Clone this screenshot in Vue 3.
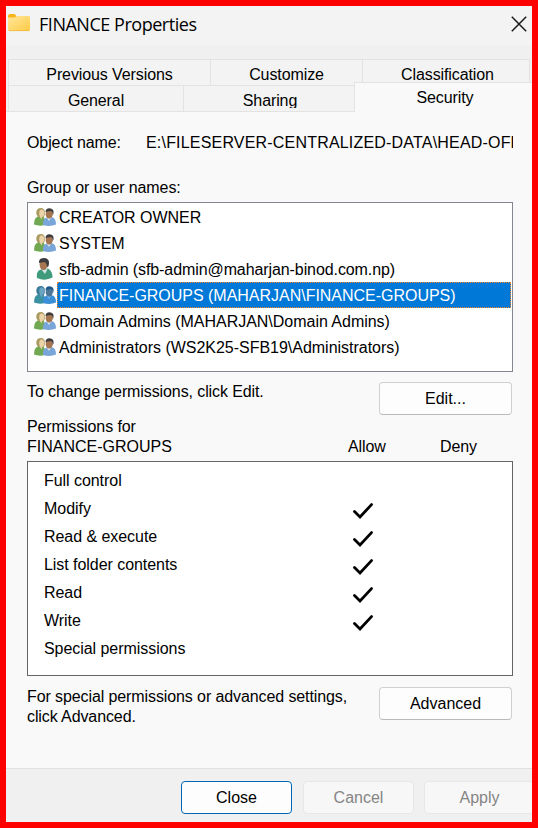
<script setup>
    import { ref } from 'vue';

    const backTabs = [
        { name: 'Previous Versions', class: 'tab--previous' },
        { name: 'Customize', class: 'tab--customize' },
        { name: 'Classification', class: 'tab--classification' },
    ];

    const principals = [
        { name: 'CREATOR OWNER', group: true },
        { name: 'SYSTEM', group: true },
        { name: 'sfb-admin (sfb-admin@maharjan-binod.com.np)', group: false },
        { name: 'FINANCE-GROUPS (MAHARJAN\\FINANCE-GROUPS)', group: true },
        { name: 'Domain Admins (MAHARJAN\\Domain Admins)', group: true },
        { name: 'Administrators (WS2K25-SFB19\\Administrators)', group: true },
    ];

    const permissions = [
        { name: 'Full control', allow: false },
        { name: 'Modify', allow: true },
        { name: 'Read & execute', allow: true },
        { name: 'List folder contents', allow: true },
        { name: 'Read', allow: true },
        { name: 'Write', allow: true },
        { name: 'Special permissions', allow: false },
    ];

    const selected = ref(3);

    function handleSelect(index) {
        selected.value = index;
    }
</script>

<template>
    <main class='dialog'>
        <header class='title-bar'>
            <svg class='title--folder' width='22' height='18' viewBox='0 0 22 18'>
                <defs>
                    <linearGradient id='folder' x1='0' y1='0' x2='1' y2='1'>
                        <stop offset='0' stop-color='#ffe69c' />
                        <stop offset='1' stop-color='#ffcb45' />
                    </linearGradient>
                </defs>
                <path d='M0 2Q0 0 2 0H6.5L8.5 2H20V8H0Z' fill='#f9b51c' />
                <path d='M0 3.500H6.5L9 2H20.5Q22 2 22 3.5V15.500Q22 17 20.500 17H1.500Q0 17 0 15.500Z' fill='url(#folder)' />
                <path d='M1 16.600H21' stroke='#efb63c' stroke-width='.8' />
            </svg>
            <h1 class='title--text'>FINANCE Properties</h1>
            <svg class='title--close' width='16' height='16' viewBox='0 0 16 16'>
                <path d='M.8.8 15.200 15.200M15.200.8.8 15.200' stroke='#1a1a1a' stroke-width='1.5' />
            </svg>
        </header>

        <nav class='tabs'>
            <div class='tab--row'>
                <span v-for='tab in backTabs' :key='tab.name' class='tab' :class='tab.class'>{{ tab.name }}</span>
            </div>
            <div class='tab--row'>
                <span class='tab tab--general'>General</span>
                <span class='tab tab--sharing'><span class='tab--clip'>Sharing</span></span>
                <span class='tab tab--security'>Security</span>
            </div>
        </nav>

        <section class='page'>
            <div class='object'>
                <span class='object--label'>Object name:</span>
                <span class='object--path'>E:\FILESERVER-CENTRALIZED-DATA\HEAD-OFF</span>
            </div>

            <div class='names--label'>Group or user names:</div>
            <ul class='names'>
                <li
                    v-for='(principal, index) in principals'
                    :key='principal.name'
                    class='names--item'
                    :class='{ selected: index === selected }'
                    @click='handleSelect(index)'
                >
                    <svg v-if='principal.group' class='names--icon' width='22' height='20' viewBox='0 0 22 20'>
                        <path class='green' d='M0 17.500Q0 10.500 4 9.500L9 9.300Q11.500 11 11 18Q5 19.500 0 17.500Z' />
                        <path class='blonde' d='M2.500 7.500Q1.500 1 6.500 1Q11.500 1 10.800 6.500Q11 10 8.500 10.500L4 10Z' />
                        <ellipse class='face' cx='7.700' cy='6.200' rx='2.500' ry='3.600' />
                        <path class='face' d='M5.500 9H8.500L7.500 12.500Z' />
                        <path class='blue' d='M9 18Q8.500 12 12 10.800L18 10.200Q22 11.300 22 17.500Q16 20 9 18Z' />
                        <path class='collar' d='M12.500 10.500 15 14 17.500 10.300Z' />
                        <ellipse class='skin' cx='15.200' cy='6.900' rx='3.600' ry='4.700' />
                        <path class='hair' d='M11.500 5Q11.500 1.500 15.500 1.200Q20.300 1.500 19.500 6.500L18.800 8Q18.700 4 16.500 3.900Q13.500 4.500 11.500 5Z' />
                    </svg>
                    <svg v-else class='names--icon names--icon-user' width='22' height='24' viewBox='0 0 22 24'>
                        <path class='teal' d='M3 21Q2 14.500 6 12.700L14 11.500Q18.500 14 18.500 20.500Q11 24.500 3 21Z' />
                        <path class='collar' d='M7.500 12.500 11 17 13.500 12Z' />
                        <ellipse class='skin' cx='9.500' cy='7.500' rx='3.900' ry='5.500' />
                        <path class='hair' d='M5 6Q4.500 1.200 9.500 1Q15.500 1 15 6.500Q15 9.500 13.300 10.500Q12.800 5.500 10 5Q7.500 5.700 5 6Z' />
                    </svg>
                    <span class='names--text'>{{ principal.name }}</span>
                </li>
            </ul>

            <div class='edit'>
                <span class='edit--hint'>To change permissions, click Edit.</span>
                <button class='button'>Edit...</button>
            </div>

            <div class='heading'>
                <span class='heading--name'>Permissions for<br /><span class='heading--group'>FINANCE-GROUPS</span></span>
                <span class='heading--allow'>Allow</span>
                <span class='heading--deny'>Deny</span>
            </div>
            <ul class='permissions'>
                <li v-for='permission in permissions' :key='permission.name' class='permissions--item'>
                    <span class='permissions--name'>{{ permission.name }}</span>
                    <svg v-if='permission.allow' class='permissions--check' width='20' height='16' viewBox='0 0 20 16'>
                        <path d='M1.500 8.500 7 14 18.500 1.600' />
                    </svg>
                </li>
            </ul>

            <div class='advanced'>
                <span class='advanced--hint'>For special permissions or advanced settings,<br />click Advanced.</span>
                <button class='button'>Advanced</button>
            </div>
        </section>

        <footer class='actions'>
            <button class='button button--default'>Close</button>
            <button class='button' disabled>Cancel</button>
            <button class='button button--apply' disabled>Apply</button>
        </footer>
    </main>
</template>

<style>
    body {
        margin: 0;
        overflow: hidden;
    }
</style>

<style scoped>
    .dialog {
        box-sizing: border-box;
        width: 538px;
        height: 828px;
        overflow: hidden;
        display: flex;
        flex-direction: column;
        border: 6px solid #ff0000;
        background-color: #f0f0f0;
        color: #000;
        font: 16px/20px 'Liberation Sans', Arial, sans-serif;
        letter-spacing: -0.1px;
        white-space: nowrap;
    }

    .title-bar {
        height: 40px;
        flex: none;
        display: flex;
        align-items: flex-start;
        background-color: #f3f3f3;
    }

    .title--folder {
        margin: 8px 0 0 2px;
    }

    .title--text {
        margin: 5px 0 0 9px;
        font: 18px/26px 'Open Sans', 'Noto Sans', sans-serif;
        letter-spacing: -0.47px;
    }

    .title--close {
        margin: 10px 5px 0 auto;
    }

    .tabs {
        height: 53px;
        flex: none;
        padding-top: 13px;
    }

    .tab--row {
        display: flex;
        height: 26px;
        padding-left: 2px;
    }

    .tab {
        box-sizing: border-box;
        height: 26px;
        padding-top: 5px;
        text-align: center;
        border-top: 1px solid #e3e3e3;
        border-right: 1px solid #e3e3e3;
        background-color: #f3f3f3;
    }

    .tab--previous {
        width: 203px;
        border-left: 1px solid #e3e3e3;
    }

    .tab--customize {
        width: 152px;
    }

    .tab--classification {
        width: 167px;
        padding-left: 3px;
    }

    .tab--general {
        width: 176px;
        border-left: 1px solid #e3e3e3;
    }

    .tab--sharing {
        width: 171px;
        padding-left: 2px;
    }

    .tab--clip {
        display: block;
        height: 17px;
        overflow: hidden;
    }

    .tab--security {
        flex: 1;
        height: 30px;
        margin: -3px 0 0 -1px;
        padding-left: 3px;
        border-left: 1px solid #e3e3e3;
        border-right: 0;
        background-color: #f9f9f9;
        z-index: 1;
    }

    .page {
        box-sizing: border-box;
        height: 657px;
        flex: none;
        margin-top: -1px;
        padding: 21px 19px 0 21px;
        border-top: 1px solid #e3e3e3;
        background-color: #f9f9f9;
    }

    .object {
        display: flex;
    }

    .object--label {
        width: 119px;
        flex: none;
    }

    .object--path {
        width: 367px;
        overflow: hidden;
        letter-spacing: 0.19px;
    }

    .names--label {
        margin-top: 25px;
    }

    ul {
        margin: 0;
        padding: 0;
        list-style: none;
        box-sizing: border-box;
        width: 486px;
        background-color: #fff;
    }

    .names {
        height: 170px;
        margin-top: 4px;
        padding: 1px;
        border: 1px solid #828790;
    }

    .names--item {
        display: flex;
        align-items: center;
        height: 26px;
        padding-left: 5px;
        letter-spacing: -0.02px;
        cursor: default;
    }

    .names--icon {
        flex: none;
    }

    .names--icon-user + .names--text {
        letter-spacing: -0.09px;
    }

    .names--text {
        box-sizing: border-box;
        flex: 1;
        height: 26px;
        margin-left: 1px;
        padding: 3px 1px 1px;
        border: 1px solid transparent;
    }

    .selected .names--text {
        color: #fff;
        background-color: #0078d7;
        border: 1px dotted #ff8728;
    }

    .green { fill: #71a952; }
    .blonde { fill: #a99b60; }
    .face { fill: #ecd2a8; }
    .blue { fill: #79a5d8; }
    .teal { fill: #3f9b7c; }
    .collar { fill: #d8e5ec; }
    .skin { fill: #a57650; }
    .hair { fill: #3c3c3e; }

    .selected .green { fill: #3a92a0; }
    .selected .blonde { fill: #3c7c9b; }
    .selected .face { fill: #6ba5c2; }
    .selected .blue { fill: #3c8ed6; }
    .selected .collar { fill: #6cb0e2; }
    .selected .skin { fill: #4c7796; }
    .selected .hair { fill: #1d578a; }

    .button {
        box-sizing: border-box;
        width: 133px;
        height: 33px;
        flex: none;
        padding: 0;
        border: 1px solid #d0d0d0;
        border-bottom-color: #bababa;
        border-radius: 4px;
        background-color: #fdfdfd;
        color: #000;
        font: inherit;
    }

    .edit,
    .advanced {
        display: flex;
        align-items: flex-start;
        justify-content: space-between;
        width: 485px;
    }

    .edit {
        margin-top: 10px;
    }

    .heading {
        display: flex;
        align-items: flex-end;
        margin-top: 2px;
    }

    .heading--name {
        width: 321px;
    }

    .heading--group {
        letter-spacing: 0;
    }

    .heading--allow {
        width: 92px;
    }

    .permissions {
        height: 215px;
        margin-top: 4px;
        padding: 5px 0 0 16px;
        border: 1px solid #646464;
    }

    .permissions--item {
        display: flex;
        align-items: center;
        height: 28px;
        letter-spacing: -0.05px;
    }

    .permissions--name {
        width: 309px;
    }

    .permissions--check {
        margin-top: 3px;
        fill: none;
        stroke: #000;
        stroke-width: 2.8;
        stroke-linecap: round;
    }

    .advanced {
        margin-top: 11px;
    }

    .actions {
        box-sizing: border-box;
        flex: 1;
        display: flex;
        gap: 11px;
        padding: 12px 0 0 175px;
        border-top: 1px solid #e0e0e0;
    }

    .actions .button {
        width: 111px;
    }

    .actions .button--default {
        border-color: #0067b8;
    }

    .actions .button:disabled {
        color: #858585;
        border-color: #e7e7e7;
        background-color: #f7f7f7;
    }

    .actions .button--apply {
        margin-left: -1px;
    }
</style>
